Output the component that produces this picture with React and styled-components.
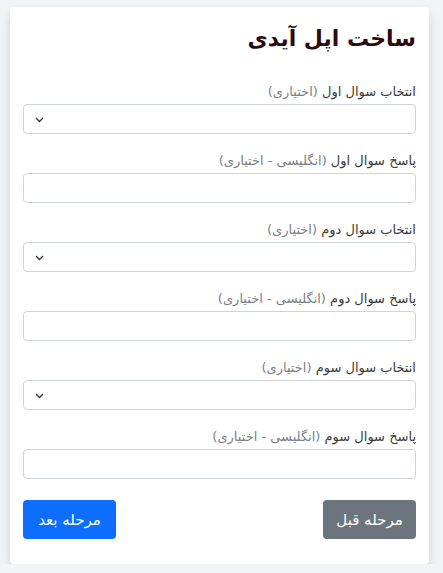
import React from "react";
import styled, { createGlobalStyle } from "styled-components";

const GlobalStyle = createGlobalStyle`
  * { box-sizing: border-box; }
  body {
    margin: 0;
    background: #f3f4f6;
    font-family: "DejaVu Sans", "Noto Sans", sans-serif;
    direction: rtl;
  }
`;

const Card = styled.div`
  margin: 7px 14px 0 10px;
  width: 419px;
  background: #fff;
  border-radius: 4px;
  box-shadow: 0 6px 12px rgba(0, 0, 0, 0.14);
  padding: 14px 13px 25px;
`;

const Title = styled.h2`
  margin: 0 0 24px;
  font-size: 22px;
  font-weight: bold;
  color: #2b0a10;
  line-height: 36px;
`;

const Group = styled.div`
  margin-bottom: 16px;
`;

const Label = styled.label`
  display: block;
  font-size: 13px;
  line-height: 21px;
  color: #3a3a3a;
  margin-bottom: 2px;
`;

const Muted = styled.span`
  color: #7a7f85;
`;

const Field = styled.input`
  display: block;
  width: 100%;
  height: 30px;
  border: 1px solid #ced4da;
  border-radius: 4px;
  background: #fff;
  outline: none;
`;

const SelectBox = styled.div`
  position: relative;
  height: 30px;
  border: 1px solid #ced4da;
  border-radius: 4px;
  background: #fff;
`;

const Chevron = styled.svg`
  position: absolute;
  left: 11px;
  top: 12px;
`;

const Actions = styled.div`
  display: flex;
  justify-content: space-between;
  margin-top: 21px;
`;

const Button = styled.button`
  height: 39px;
  width: 93px;
  border: none;
  border-radius: 4px;
  color: #fff;
  font-family: inherit;
  font-size: 15px;
  background: ${(p) => (p.$primary ? "#0d6efd" : "#6c757d")};
`;

const Select = () => (
  <SelectBox>
    <Chevron width="9" height="6" viewBox="0 0 9 6">
      <path d="M1 1l3.5 3.5L8 1" fill="none" stroke="#343a40" strokeWidth="1.4" />
    </Chevron>
  </SelectBox>
);

const questions = ["اول", "دوم", "سوم"];

export default function App() {
  return (
    <>
      <GlobalStyle />
      <Card>
        <Title>ساخت اپل آیدی</Title>
        {questions.map((q) => (
          <React.Fragment key={q}>
            <Group>
              <Label>
                انتخاب سوال {q} <Muted>(اختیاری)</Muted>
              </Label>
              <Select />
            </Group>
            <Group>
              <Label>
                پاسخ سوال {q} <Muted>(انگلیسی - اختیاری)</Muted>
              </Label>
              <Field type="text" />
            </Group>
          </React.Fragment>
        ))}
        <Actions>
          <Button>مرحله قبل</Button>
          <Button $primary>مرحله بعد</Button>
        </Actions>
      </Card>
    </>
  );
}
